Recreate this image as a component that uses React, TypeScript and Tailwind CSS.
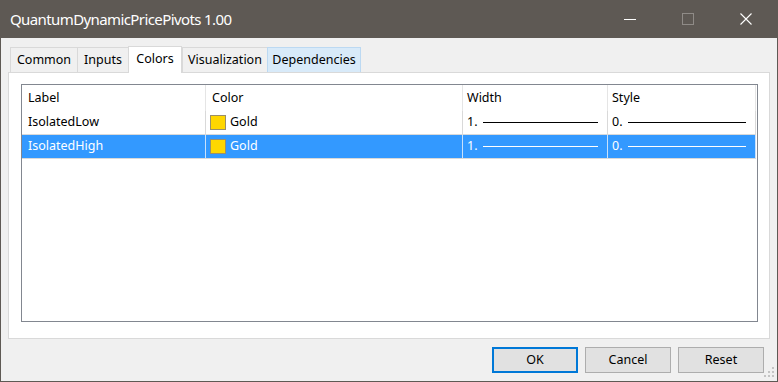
import React from 'react';

const font = { fontFamily: '"Segoe UI", "Noto Sans", sans-serif' };

type Row = { label: string; color: string; width: string; style: string };

const rows: Row[] = [
  { label: 'IsolatedLow', color: 'Gold', width: '1.', style: '0.' },
  { label: 'IsolatedHigh', color: 'Gold', width: '1.', style: '0.' },
];

const tabs = [
  { name: 'Common', w: 'w-[67px]' },
  { name: 'Inputs', w: 'w-[51px]' },
  { name: 'Colors', w: 'w-[54px]', active: true },
  { name: 'Visualization', w: 'w-[85px]' },
  { name: 'Dependencies', w: 'w-[94px]', hover: true },
];

function TitleBar() {
  return (
    <div className="flex h-[38px] shrink-0 items-center bg-[#5e5954] text-white">
      <div className="flex-1 pl-[9px] text-[15px] tracking-[-0.6px]">QuantumDynamicPricePivots 1.00</div>
      <div className="flex h-full">
        <div className="flex w-[58px] items-center justify-center">
          <svg width="12" height="12" viewBox="0 0 12 12">
            <path d="M0 6.5h12" stroke="#ffffff" strokeWidth="1" />
          </svg>
        </div>
        <div className="flex w-[58px] items-center justify-center">
          <svg width="12" height="12" viewBox="0 0 12 12">
            <rect x="0.5" y="0.5" width="11" height="11" fill="none" stroke="#8f8b87" strokeWidth="1" />
          </svg>
        </div>
        <div className="mr-[2px] flex w-[58px] items-center justify-center">
          <svg width="12" height="12" viewBox="0 0 12 12">
            <path d="M0.5 0.5L11.5 11.5M11.5 0.5L0.5 11.5" stroke="#ffffff" strokeWidth="1.1" />
          </svg>
        </div>
      </div>
    </div>
  );
}

function LineCell({ value, selected, w }: { value: string; selected: boolean; w: string }) {
  return (
    <div className={`flex h-full ${w} items-center border-r ${selected ? 'border-[#c9e1fb]' : 'border-[#d9d9d9]'} pl-[4px] pr-[9px]`}>
      <span>{value}</span>
      <span className={`ml-[5px] h-px flex-1 ${selected ? 'bg-white' : 'bg-black'}`} />
    </div>
  );
}

function Table() {
  return (
    <div className="h-[238px] w-[737px] border border-[#828790] bg-white text-[12.5px] text-black">
      <div className="flex h-[26px] items-center">
        <div className="flex h-full w-[184px] items-center border-r border-[#e5e5e5] pl-[6px]">Label</div>
        <div className="flex h-full w-[257px] items-center border-r border-[#e5e5e5] pl-[6px]">Color</div>
        <div className="flex h-full w-[145px] items-center border-r border-[#e5e5e5] pl-[4px]">Width</div>
        <div className="flex h-full w-[148px] items-center border-r border-[#e5e5e5] pl-[4px]">Style</div>
      </div>
      {rows.map((r, i) => {
        const selected = i === 1;
        return (
          <div
            key={r.label}
            className={`flex h-[24px] w-[734px] items-center border-b border-[#d9d9d9] ${selected ? 'bg-[#3399ff] text-white' : ''}`}
          >
            <div className={`flex h-full w-[184px] items-center border-r ${selected ? 'border-[#c9e1fb]' : 'border-[#d9d9d9]'} pl-[6px]`}>
              {r.label}
            </div>
            <div className={`flex h-full w-[257px] items-center border-r ${selected ? 'border-[#c9e1fb]' : 'border-[#d9d9d9]'} pl-[4px]`}>
              <span className="h-[15px] w-[16px] border border-[#9a8f6a] bg-[#ffd700]" />
              <span className="ml-[4px]">{r.color}</span>
            </div>
            <LineCell value={r.width} selected={selected} w="w-[145px]" />
            <LineCell value={r.style} selected={selected} w="w-[148px]" />
          </div>
        );
      })}
    </div>
  );
}

function Grip() {
  const dots = [
    [8, 0],
    [4, 4],
    [8, 4],
    [0, 8],
    [4, 8],
    [8, 8],
  ];
  return (
    <svg className="absolute bottom-[3px] right-[2px]" width="11" height="11" viewBox="0 0 11 11">
      {dots.map(([x, y]) => (
        <rect key={`${x}-${y}`} x={x} y={y} width="2" height="2" fill="#c4c4c4" />
      ))}
    </svg>
  );
}

export default function App() {
  return (
    <div className="relative flex h-[382px] w-[778px] flex-col border-x border-b border-[#5e5954] bg-[#f0f0f0]" style={font}>
      <TitleBar />
      <div className="flex flex-1 flex-col px-[7px] pt-[8px]">
        <div className="flex h-[26px] items-end pl-[2px] text-[12.5px] text-black">
          {tabs.map((t) =>
            t.active ? (
              <div
                key={t.name}
                className={`relative z-10 -mb-px flex h-[27px] ${t.w} items-start justify-center border-x border-t border-[#d9d9d9] bg-white pt-[3px]`}
              >
                {t.name}
              </div>
            ) : (
              <div
                key={t.name}
                className={`flex h-[25px] ${t.w} items-center justify-center border-l border-t ${
                  t.hover ? 'border-r border-[#bcd9f2] bg-[#d8eaf9]' : 'border-[#d9d9d9] bg-[#f0f0f0]'
                } pt-[1px]`}
              >
                {t.name}
              </div>
            ),
          )}
        </div>
        <div className="flex h-[267px] w-[762px] flex-col border border-[#d9d9d9] bg-white pl-[12px] pt-[11px]">
          <Table />
        </div>
        <div className="mt-[8px] flex justify-end gap-[7px] pr-[6px] text-[12.5px] text-black">
          <button className="h-[26px] w-[86px] border-2 border-[#0078d7] bg-[#e1e1e1]">OK</button>
          <button className="h-[26px] w-[86px] border border-[#adadad] bg-[#e1e1e1]">Cancel</button>
          <button className="h-[26px] w-[86px] border border-[#adadad] bg-[#e1e1e1]">Reset</button>
        </div>
      </div>
      <Grip />
    </div>
  );
}
